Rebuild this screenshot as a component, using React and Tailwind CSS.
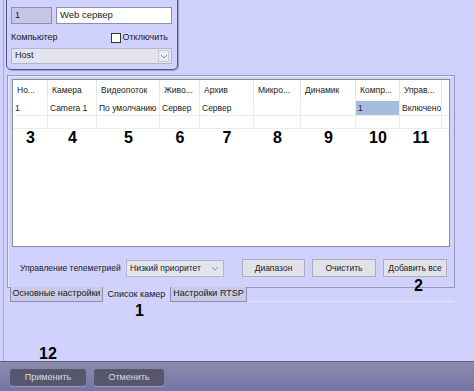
import React from 'react';

const cols = [
  { w: 35, head: 'Но...', val: '1', num: '3' },
  { w: 49, head: 'Камера', val: 'Camera 1', num: '4' },
  { w: 63, head: 'Видеопоток', val: 'По умолчанию', num: '5' },
  { w: 40, head: 'Живо...', val: 'Сервер', num: '6' },
  { w: 54, head: 'Архив', val: 'Сервер', num: '7' },
  { w: 47, head: 'Микро...', val: '', num: '8' },
  { w: 55, head: 'Динамик', val: '', num: '9' },
  { w: 44, head: 'Компр...', val: '1', num: '10', sel: true },
  { w: 42, head: 'Управ...', val: 'Включено', num: '11' },
];

const Chevron = () => (
  <svg width="8" height="5" viewBox="0 0 8 5" className="text-[#8c8ca0]">
    <path d="M1 1 L4 4 L7 1" fill="none" stroke="currentColor" strokeWidth="1" />
  </svg>
);

const Num = ({ children, className = '' }) => (
  <span className={`text-[16px] font-bold leading-none text-black ${className}`}>{children}</span>
);

export default function App() {
  return (
    <div className="w-[474px] h-[391px] bg-[#cfd0fc] flex flex-col overflow-hidden font-['Liberation_Sans',Arial,sans-serif] text-[8.5px] text-[#1a1a1a] relative">
      <div className="flex-1 ml-[3px] border-l border-[#a9aacb] bg-[#d0d1fd] relative">
        {/* top panel */}
        <div className="ml-[2px] mt-[-2px] w-[172px] h-[72px] border border-[#52527c] rounded-b-[5px] shadow-[1px_1px_1px_rgba(60,60,100,0.35)] pl-[4px] pr-[5px] pt-[8px]">
          <div className="flex gap-[4px]">
            <div className="w-[41px] h-[17px] bg-[#c6c6e6] border border-[#8c8cae] flex items-center px-[3px] text-[9px]">1</div>
            <div className="flex-1 h-[17px] bg-white border border-[#8c8cae] flex items-center px-[3px] text-[9.5px]">Web сервер</div>
          </div>
          <div className="flex items-center justify-between h-[12px] mt-[8px] text-[9px]">
            <span>Компьютер</span>
            <div className="flex items-center gap-[2px] mr-[4px]">
              <div className="w-[10px] h-[10px] bg-white border border-[#333]" />
              <span>Отключить</span>
            </div>
          </div>
          <div className="mt-[4px] h-[16px] bg-[#e4e4ee] border border-[#b5b5c8] flex items-center justify-between pl-[3px] pr-[2px] text-[9px]">
            <span>Host</span>
            <div className="w-[11px] h-[12px] bg-[#ececf4] border border-[#c8c8d8] flex items-center justify-center">
              <Chevron />
            </div>
          </div>
        </div>

        {/* tab panel */}
        <div className="ml-[3px] mt-[5px] w-[448px] h-[213px] border border-[#9797b6] shadow-[inset_1px_1px_0_#eaeaff]">
          <div className="ml-[4px] mt-[3px] w-[438px] h-[168px] bg-white border border-[#8a8c96]">
            <div className="flex h-[21px]">
              {cols.map((c) => (
                <div key={c.head} style={{ width: c.w }} className="border-r border-[#e6e6e6] flex items-center pl-[4px] text-[#222] whitespace-nowrap">
                  {c.head}
                </div>
              ))}
            </div>
            <div className="flex h-[15px] border-b border-[#ececec]">
              {cols.map((c) => (
                <div key={c.head} style={{ width: c.w }} className={`border-r border-[#ececec] flex items-center pl-[2px] whitespace-nowrap overflow-hidden ${c.sel ? 'bg-[#a6bde0]' : ''}`}>
                  {c.val}
                </div>
              ))}
            </div>
            <div className="flex h-[13px] border-b border-[#ececec]">
              {cols.map((c) => (
                <div key={c.head} style={{ width: c.w }} className="border-r border-[#ececec]" />
              ))}
            </div>
            <div className="flex h-[18px] items-center">
              {cols.map((c) => (
                <div key={c.head} style={{ width: c.w }} className="flex justify-center">
                  <Num>{c.num}</Num>
                </div>
              ))}
            </div>
          </div>
          <div className="flex items-center mt-[12px] ml-[12px] h-[18px]">
            <span className="w-[106px]">Управление телеметрией</span>
            <div className="w-[98px] h-[17px] bg-[#e4e4ee] border border-[#b5b5c8] flex items-center justify-between pl-[3px] pr-[4px]">
              <span>Низкий приоритет</span>
              <Chevron />
            </div>
            <button className="ml-[18px] w-[63px] h-[18px] bg-[#e1e1ea] border border-[#adadbe]">Диапазон</button>
            <button className="ml-[7px] w-[64px] h-[18px] bg-[#e1e1ea] border border-[#adadbe]">Очистить</button>
            <button className="ml-[7px] w-[64px] h-[18px] bg-[#e1e1ea] border border-[#adadbe]">Добавить все</button>
          </div>
        </div>

        {/* tabs */}
        <div className="flex ml-[6px] h-[16px] mt-[-1px] text-[9px]">
          <div className="w-[93px] h-[15px] bg-[#c9cae8] border border-[#8e8eae] border-t-0 flex items-center justify-center">Основные настройки</div>
          <div className="w-[67px] h-[16px] bg-[#d0d1fd] flex items-center justify-center">Список камер</div>
          <div className="w-[77px] h-[15px] bg-[#c9cae8] border border-[#8e8eae] border-t-0 flex items-center justify-center">Настройки RTSP</div>
          <div className="w-[207px] border-b border-[#e6e6ff] h-[15px]" />
        </div>

        <Num className="absolute left-[131px] top-[303px]">1</Num>
        <Num className="absolute left-[410px] top-[278px]">2</Num>
        <Num className="absolute left-[35px] top-[346px]">12</Num>
      </div>

      {/* bottom bar */}
      <div className="h-[30px] border-t border-[#5d5d7c] bg-gradient-to-b from-[#8c8cad] to-[#7474a6] flex items-center gap-[8px] pl-[10px] pt-[2px]">
        <button className="w-[76px] h-[17px] rounded-[3px] bg-[#56576c] text-[#dcdce6] text-[9px] shadow-[0_1px_0_#9a9ac0]">Применить</button>
        <button className="w-[70px] h-[17px] rounded-[3px] bg-[#56576c] text-[#dcdce6] text-[9px] shadow-[0_1px_0_#9a9ac0]">Отменить</button>
      </div>
    </div>
  );
}
